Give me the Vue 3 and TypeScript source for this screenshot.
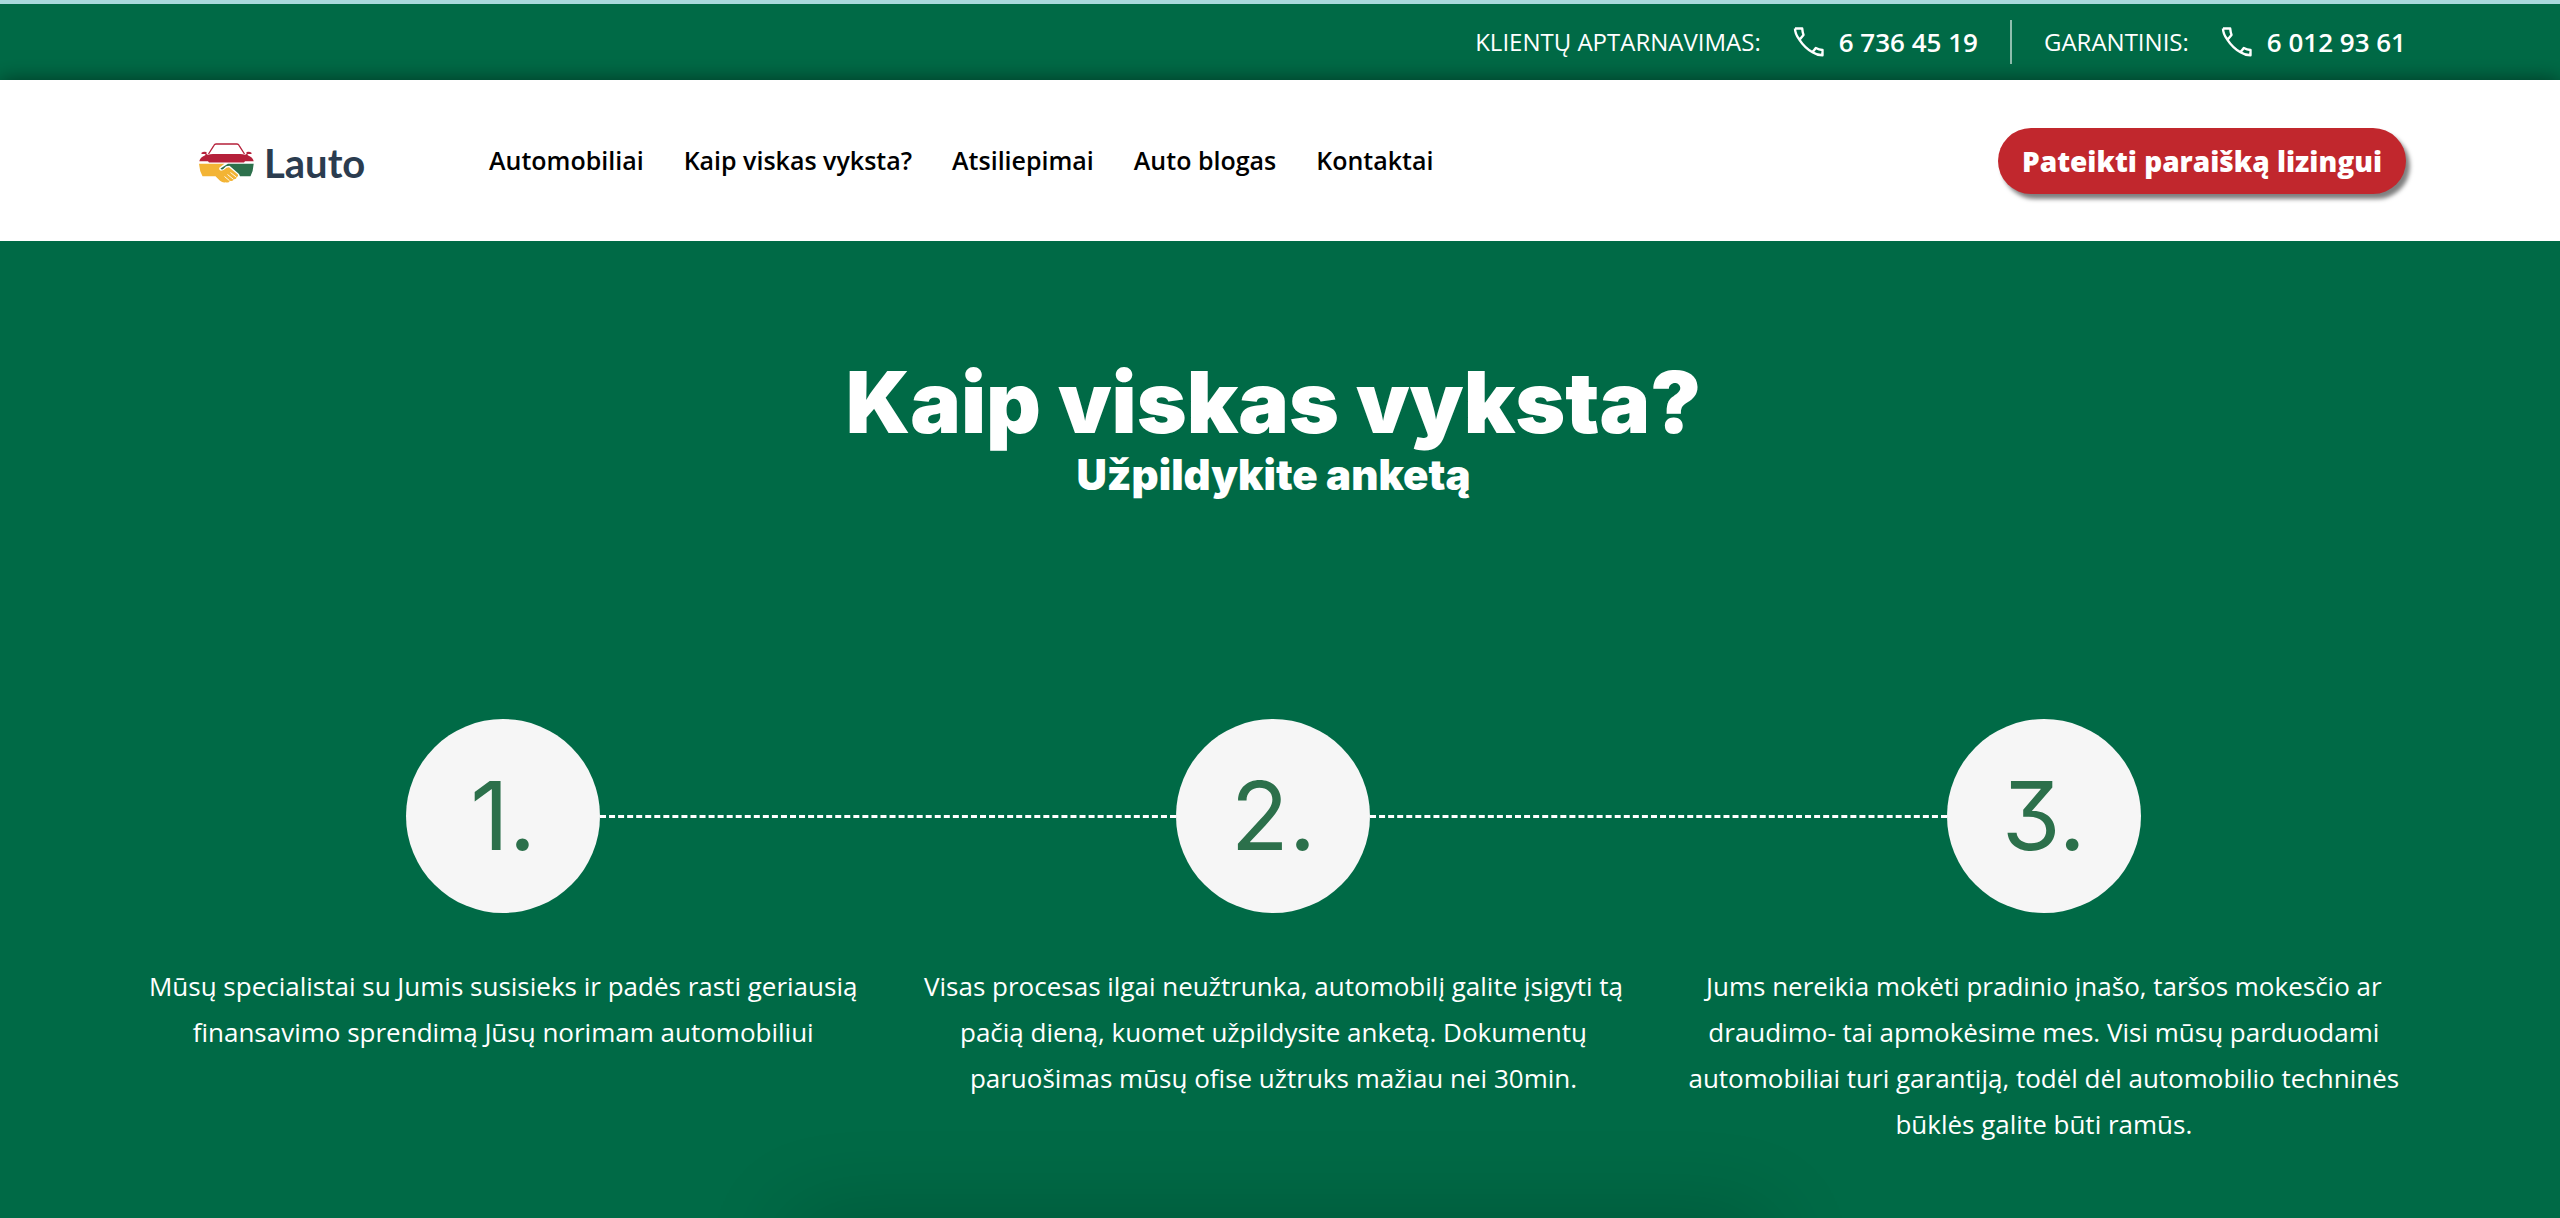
<script setup lang="ts">
interface Contact {
  label: string
  phone: string
}

interface Step {
  mark: string
  text: string
}

const contacts: Contact[] = [
  { label: 'KLIENTŲ APTARNAVIMAS:', phone: '6 736 45 19' },
  { label: 'GARANTINIS:', phone: '6 012 93 61' },
]

const links: string[] = ['Automobiliai', 'Kaip viskas vyksta?', 'Atsiliepimai', 'Auto blogas', 'Kontaktai']

const steps: Step[] = [
  {
    mark: '1.',
    text: 'Mūsų specialistai su Jumis susisieks ir padės rasti geriausią finansavimo sprendimą Jūsų norimam automobiliui',
  },
  {
    mark: '2.',
    text: 'Visas procesas ilgai neužtrunka, automobilį galite įsigyti tą pačią dieną, kuomet užpildysite anketą. Dokumentų paruošimas mūsų ofise užtruks mažiau nei 30min.',
  },
  {
    mark: '3.',
    text: 'Jums nereikia mokėti pradinio įnašo, taršos mokesčio ar draudimo- tai apmokėsime mes. Visi mūsų parduodami automobiliai turi garantiją, todėl dėl automobilio techninės būklės galite būti ramūs.',
  },
]
</script>

<template>
  <div class="page">
    <div class="topbar">
      <div v-for="c in contacts" :key="c.phone" class="contact">
        <span>{{ c.label }}</span>
        <a class="phone" :href="'tel:' + c.phone.replace(/ /g, '')">
          <svg class="phone-icon" viewBox="0 0 31 30" aria-hidden="true">
            <path
              d="M2 1.500H9.200Q9.500 5 10.500 8L6.500 12.800M2 1.500Q2 7 6.500 12.800Q11.500 20.500 19.500 25.300Q24 28.300 29.500 28.300V23Q26 22.800 22.800 21L19.500 25.300"
            />
          </svg>
          <strong>{{ c.phone }}</strong>
        </a>
      </div>
    </div>

    <header class="header">
      <a class="logo" href="#" aria-label="Lauto">
        <svg class="logo-mark" viewBox="0 0 55 40" aria-hidden="true">
          <path d="M9.500 11 15 2.300Q15.700 1 17 1H38Q39.300 1 40 2.300L45.500 11" fill="none" stroke="#b5203a" stroke-width="1.300" />
          <path
            d="M2.500 9.800Q4.500 8 7.500 9V11L9 11.800Q11 11 14 11H41Q44 11 46 11.800L47.500 11V9Q50.500 8 52.500 9.800V11H48.500L48.800 12.300Q54 14.500 54.700 18.300H46L45 19.600H10L9 18.300H.300Q1 14.500 6.200 12.300L6.500 11H2.500Z"
            fill="#b5203a"
          />
          <path
            d="M0 20.700H25.500L20.500 24.500Q19.300 27 22 27.700Q25 27.500 27.500 24.800L30 24.300L38.800 31.500Q39.600 33.500 37.600 34.200Q37.600 36.500 34.800 36.300Q34 38.600 31 37.700Q29.500 40.500 26.500 39.200Q24 40 21 37.800L16.500 33.300H3.500Q.500 28 0 20.700Z"
            fill="#f3b435"
          />
          <path d="M29 20.700H54.700Q54.300 28 51.500 33.300H41L40 31L30.500 22.800L27 23.300L24 26.300Q22 26.800 21.500 25.500Z" fill="#2c704b" />
          <path d="M31.500 29.500 37.200 34M28.500 31.500 34.300 36.200M25.500 33.500 30.500 37.700" stroke="#fff" stroke-width=".9" fill="none" />
        </svg>
        <span class="logo-name">Lauto</span>
      </a>
      <nav class="nav">
        <a v-for="l in links" :key="l" href="#">{{ l }}</a>
      </nav>
      <button type="button" class="apply">Pateikti paraišką lizingui</button>
    </header>

    <main class="hero">
      <h1>Kaip viskas vyksta?</h1>
      <h2>Užpildykite anketą</h2>
      <ol class="steps">
        <li v-for="s in steps" :key="s.mark" class="step">
          <div class="circle">{{ s.mark }}</div>
          <p>{{ s.text }}</p>
        </li>
      </ol>
      <div class="next-card"></div>
    </main>
  </div>
</template>

<style>
body {
  margin: 0;
  background: #006a46;
}
</style>

<style scoped>
.page {
  display: flex;
  flex-direction: column;
  min-height: 100vh;
  overflow: hidden;
  font-family: 'Open Sans', 'Noto Sans', sans-serif;
  color: #fff;
  background: #006a46;
}

a {
  color: inherit;
  text-decoration: none;
}

.topbar {
  display: flex;
  justify-content: flex-end;
  align-items: center;
  height: 76px;
  padding-right: 154px;
  border-top: 4px solid #a9dadd;
  font-size: 24px;
  line-height: 32px;
}

.contact {
  display: flex;
  align-items: center;
  height: 44px;
}

.contact + .contact {
  margin-left: 32px;
  padding-left: 32px;
  border-left: 2px solid #8fbfae;
}

.phone {
  display: flex;
  align-items: center;
  margin-left: 32px;
  font-size: 26px;
}

.phone strong {
  font-weight: 600;
}

.phone-icon {
  width: 31px;
  height: 30px;
  margin-right: 15px;
  fill: none;
  stroke: #fff;
  stroke-width: 2.4;
  stroke-linejoin: round;
}

.header {
  position: relative;
  display: flex;
  align-items: center;
  height: 161px;
  padding: 0 154px 0 199px;
  color: #000;
  background: #fff;
  box-shadow: 0 0 20px rgba(0, 0, 0, 0.5);
}

.logo {
  display: flex;
  align-items: center;
  width: 290px;
  padding-top: 4px;
}

.logo-mark {
  width: 55px;
  height: 40px;
}

.logo-name {
  margin-left: 10px;
  font-family: Lato, sans-serif;
  font-size: 40px;
  font-weight: 700;
  line-height: 48px;
  color: #2b3c4f;
}

.nav {
  display: flex;
  gap: 40px;
  padding-bottom: 2px;
  font-size: 25px;
  font-weight: 600;
  line-height: 36px;
}

.apply {
  height: 66px;
  margin-left: auto;
  padding: 0 24px;
  border: 0;
  border-radius: 33px;
  font-family: inherit;
  font-size: 28px;
  font-weight: 800;
  color: #fff;
  background: #c1272d;
  box-shadow: 4px 5px 4px rgba(0, 0, 0, 0.5);
}

.hero {
  position: relative;
  flex: 1;
  padding: 118px 131px 0 118px;
  text-align: center;
  background: #006a46;
}

h1 {
  margin: 0;
  font-family: Inter, sans-serif;
  font-size: 85px;
  font-weight: 900;
  line-height: 88px;
}

h2 {
  margin: 0;
  font-family: Inter, sans-serif;
  font-size: 42px;
  font-weight: 900;
  line-height: 56px;
}

.steps {
  display: flex;
  margin: 216px 0 0;
  padding: 0;
  list-style: none;
}

.step {
  position: relative;
  flex: 1;
}

/* dashed connector running from one circle to the next */
.step:not(:last-child)::after {
  content: '';
  position: absolute;
  top: 96px;
  left: calc(50% + 97px);
  width: calc(100% - 194px);
  border-top: 3px dashed #fff;
}

.circle {
  width: 194px;
  height: 194px;
  margin: 0 auto;
  border-radius: 50%;
  font-family: Inter, sans-serif;
  font-feature-settings: 'cv09';
  font-size: 95px;
  font-weight: 400;
  line-height: 194px;
  color: #2c704b;
  background: #f6f6f6;
}

.step p {
  margin: 50px 24px 0;
  font-size: 26px;
  line-height: 46px;
}

.next-card {
  position: absolute;
  top: 100%;
  left: 31%;
  right: 31%;
  height: 80px;
  box-shadow: 0 0 90px rgba(0, 0, 0, 0.2);
}
</style>
